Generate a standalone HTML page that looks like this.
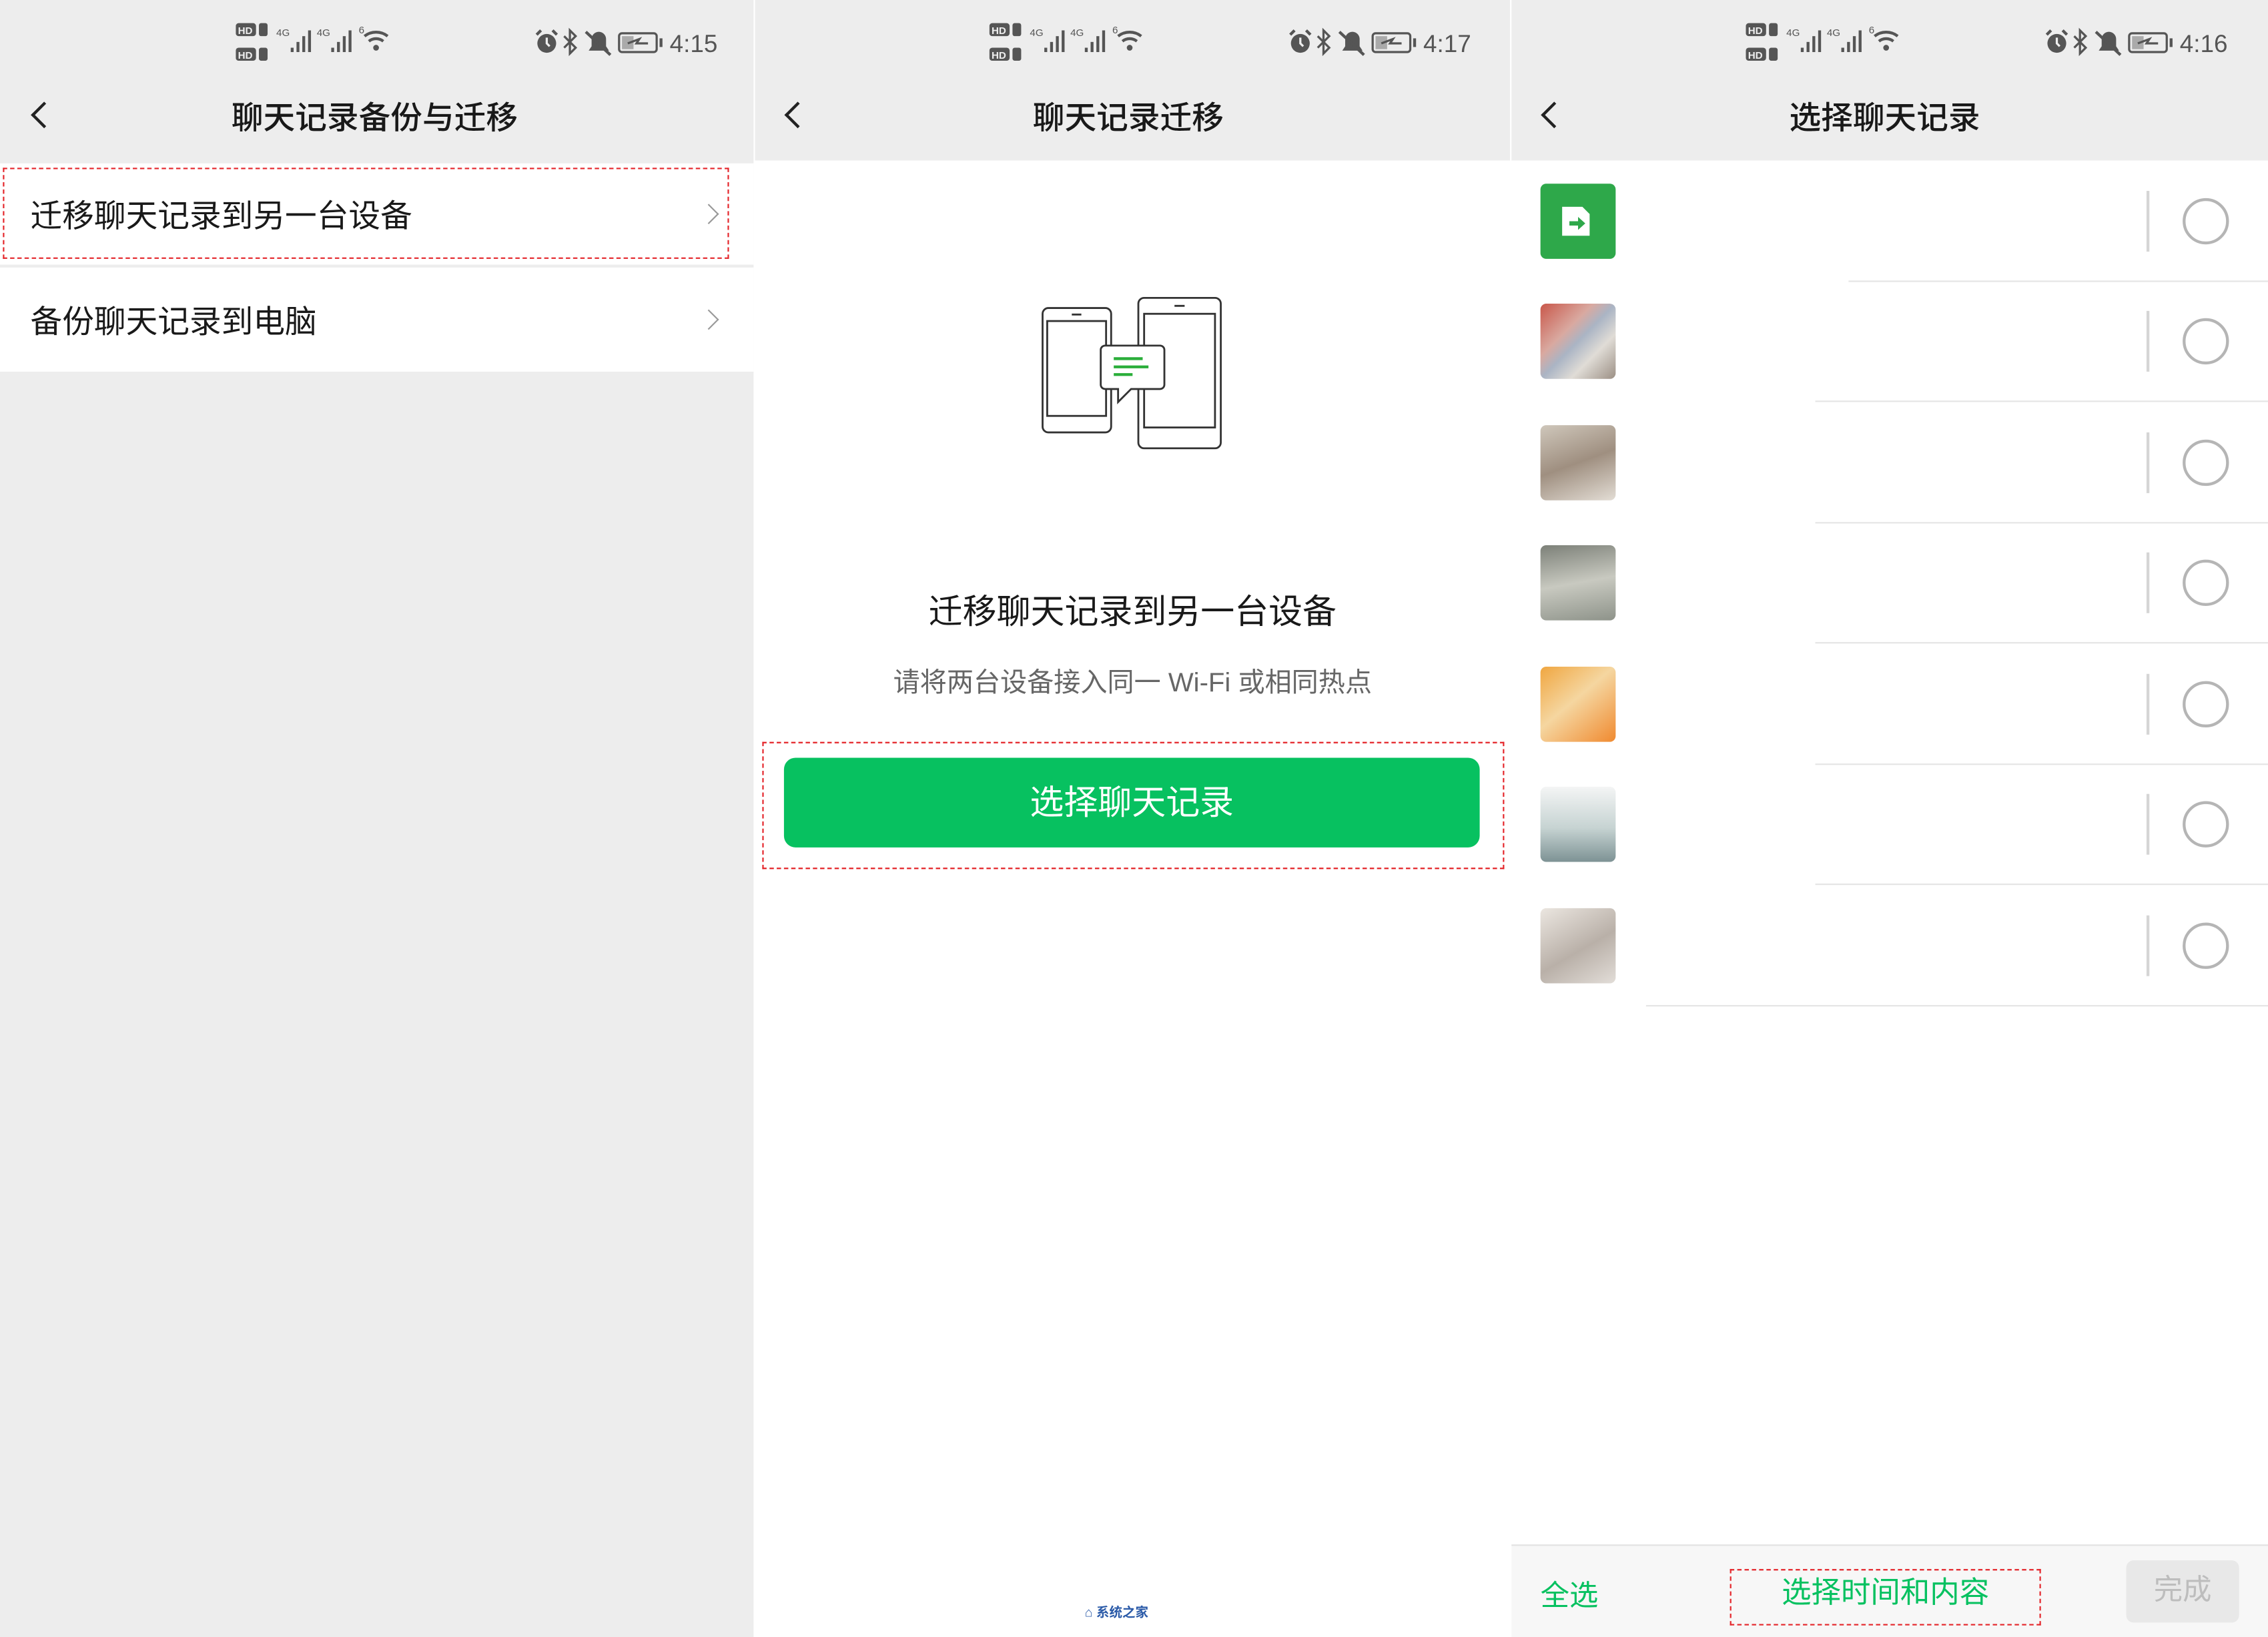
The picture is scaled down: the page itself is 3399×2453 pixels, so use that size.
<!DOCTYPE html>
<html><head><meta charset="utf-8">
<style>
*{margin:0;padding:0;box-sizing:border-box}
html,body{width:3399px;height:2453px;overflow:hidden;background:#fff}
#s{position:absolute;left:0;top:0;width:1568px;height:1132px;transform:scale(2.16773,2.16696);transform-origin:0 0;font-family:"Liberation Sans","Noto Sans CJK SC",sans-serif;color:#111}
.a{position:absolute}
.hdr{background:#ededed}
.t{font-size:22px;font-weight:500;color:#191919;white-space:nowrap}
.chev{position:absolute;width:13px;height:13px;border-left:2px solid #222;border-bottom:2px solid #222;transform:rotate(45deg)}
.rc{position:absolute;width:10px;height:10px;border-right:1.5px solid #999;border-top:1.5px solid #999;transform:rotate(45deg)}
.red{position:absolute;border:1.5px dashed #e4252a}
.av{position:absolute;left:20px;width:52px;height:52px;border-radius:4px}
.circ{position:absolute;left:464px;width:32px;height:32px;border:2px solid #b5b5b5;border-radius:50%}
.vl{position:absolute;left:439px;width:1.5px;height:42px;background:#d5d5d5}
.hl{position:absolute;right:0;height:1px;background:#e5e5e5}
.sb{position:absolute;top:13px;width:340px;height:34px}
.tm{font-family:"Liberation Sans",sans-serif;font-size:17px;fill:#555}
</style></head><body><div id="s">

<svg width="0" height="0" style="position:absolute">
<defs>
<g id="sb">
  <rect x="0" y="3" width="14" height="9" rx="2" fill="#555"/><text x="1.5" y="10.5" font-size="7" fill="#eee" font-family="Liberation Sans" font-weight="bold">HD</text>
  <rect x="16" y="3" width="6" height="9" rx="1.5" fill="#555"/>
  <rect x="0" y="20" width="14" height="9" rx="2" fill="#555"/><text x="1.5" y="27.5" font-size="7" fill="#eee" font-family="Liberation Sans" font-weight="bold">HD</text>
  <rect x="16" y="20" width="6" height="9" rx="1.5" fill="#555"/>
  <text x="28" y="12" font-size="7" fill="#555" font-family="Liberation Sans">4G</text>
  <g fill="#555"><rect x="38" y="20" width="2" height="3"/><rect x="42" y="16" width="2" height="7"/><rect x="46" y="12" width="2" height="11"/><rect x="50" y="8" width="2" height="15"/></g>
  <text x="56" y="12" font-size="7" fill="#555" font-family="Liberation Sans">4G</text>
  <g fill="#555"><rect x="66" y="20" width="2" height="3"/><rect x="70" y="16" width="2" height="7"/><rect x="74" y="12" width="2" height="11"/><rect x="78" y="8" width="2" height="15"/></g>
  <text x="85" y="10" font-size="7" fill="#555" font-family="Liberation Sans">6</text>
  <g fill="none" stroke="#555" stroke-width="2"><path d="M89 12a13 13 0 0 1 16 0"/><path d="M92 15.5a8 8 0 0 1 10 0"/></g><circle cx="97" cy="20" r="2" fill="#555"/>
  <g transform="translate(207,0)">
    <circle cx="8" cy="17" r="6.5" fill="#555"/><path d="M8 13v4l2 2" stroke="#eee" stroke-width="1.5" fill="none"/>
    <path d="M1 11l3-3M15 11l-3-3" stroke="#555" stroke-width="2"/>
    <path d="M20 12l8 8-4 4V8l4 4-8 8" fill="none" stroke="#555" stroke-width="1.5"/>
    <path d="M37 22h14l-2-3v-5a5 5 0 0 0-10 0v5z" fill="#555"/><line x1="35" y1="9" x2="52" y2="25" stroke="#555" stroke-width="2"/>
    <rect x="58" y="10" width="26" height="13" rx="2" fill="none" stroke="#555" stroke-width="1.5"/><rect x="60" y="12" width="8" height="9" fill="#aaa"/><rect x="86" y="13.5" width="2" height="6" fill="#555"/>
    <path d="M64 17l8-3-2 3 8 0" fill="none" stroke="#555" stroke-width="1.5"/>
  </g>
</g>
</defs></svg>

<!-- Panel 1 -->
<div class="a" style="left:0;top:0;width:521px;height:1132px;background:#ededed">
  <svg class="sb" style="left:163px" viewBox="0 0 340 34"><use href="#sb"/><text class="tm" x="300" y="23">4:15</text></svg>
  <div class="chev" style="left:24px;top:73px"></div>
  <div class="a t" style="left:160px;top:64px">聊天记录备份与迁移</div>
  <div class="a" style="left:0;top:113px;width:521px;height:70px;background:#fff"></div>
  <div class="a" style="left:21px;top:132px;font-size:22px;color:#191919">迁移聊天记录到另一台设备</div>
  <div class="rc" style="left:485px;top:143px"></div>
  <div class="red" style="left:2px;top:116px;width:502px;height:63px"></div>
  <div class="a" style="left:0;top:185px;width:521px;height:72px;background:#fff"></div>
  <div class="a" style="left:21px;top:205px;font-size:22px;color:#191919">备份聊天记录到电脑</div>
  <div class="rc" style="left:485px;top:216px"></div>
</div>

<!-- Panel 2 -->
<div class="a" style="left:522px;top:0;width:522px;height:1132px;background:#fff">
  <div class="a hdr" style="left:0;top:0;width:522px;height:111px"></div>
  <svg class="sb" style="left:162px" viewBox="0 0 340 34"><use href="#sb"/><text class="tm" x="300" y="23">4:17</text></svg>
  <div class="chev" style="left:23px;top:73px"></div>
  <div class="a t" style="left:192px;top:64px">聊天记录迁移</div>
  <svg class="a" style="left:190px;top:200px" width="140" height="120" viewBox="0 0 140 120">
    <g fill="none" stroke="#333" stroke-width="1.3">
      <rect x="8.8" y="13" width="47.4" height="86" rx="4" fill="#fff"/>
      <rect x="12" y="22" width="40.7" height="65.6"/>
      <line x1="29" y1="17.5" x2="35.6" y2="17.5"/>
      <rect x="75" y="6" width="57" height="104" rx="4" fill="#fff"/>
      <rect x="79" y="17" width="49" height="78.6"/>
      <line x1="100" y1="11.5" x2="107" y2="11.5"/>
      <path d="M52 39h38a3 3 0 0 1 3 3v24a3 3 0 0 1-3 3H70l-9 9v-9h-9a3 3 0 0 1-3-3V42a3 3 0 0 1 3-3z" fill="#fff"/>
    </g>
    <g stroke="#2aae3a" stroke-width="2"><line x1="58" y1="48" x2="78" y2="48"/><line x1="58" y1="53.7" x2="82" y2="53.7"/><line x1="58" y1="59" x2="71" y2="59"/></g>
  </svg>
  <div class="a" style="left:0;width:522px;top:404px;text-align:center;font-size:23.5px;color:#191919">迁移聊天记录到另一台设备</div>
  <div class="a" style="left:0;width:522px;top:458px;text-align:center;font-size:18.5px;color:#666">请将两台设备接入同一 Wi-Fi 或相同热点</div>
  <div class="a" style="left:20px;top:524px;width:481px;height:62px;background:#07c160;border-radius:8px;color:#fff;font-size:23.5px;text-align:center;line-height:62px">选择聊天记录</div>
  <div class="red" style="left:5px;top:513px;width:513px;height:88px"></div>
  <div class="a" style="left:228px;top:1108px;font-size:9px;color:#2a5aa8;font-weight:bold">⌂ 系统之家</div>
</div>

<!-- Panel 3 -->
<div class="a" style="left:1045px;top:0;width:523px;height:1132px;background:#fff">
  <div class="a hdr" style="left:0;top:0;width:523px;height:111px"></div>
  <svg class="sb" style="left:162px" viewBox="0 0 340 34"><use href="#sb"/><text class="tm" x="300" y="23">4:16</text></svg>
  <div class="chev" style="left:23px;top:73px"></div>
  <div class="a t" style="left:192px;top:64px">选择聊天记录</div>

  <div class="av" style="top:127px;background:#2ea84a">
    <svg width="52" height="52" viewBox="0 0 52 52"><path d="M15 16h14l5 5v15H15z" fill="#fff"/><path d="M20 26h6v-3l5 4.5-5 4.5v-3h-6z" fill="#2ea84a"/></svg>
  </div>
  <div class="av" style="top:210px;background:linear-gradient(135deg,#c9574a 0%,#d9a9a0 35%,#aab4c4 50%,#e0dcd6 70%,#9b8f84 100%)"></div>
  <div class="av" style="top:294px;background:linear-gradient(160deg,#cfc7bb,#9f8f80 50%,#e3ddd5)"></div>
  <div class="av" style="top:377px;background:linear-gradient(170deg,#7c8078,#c8c9c0 50%,#8e938a)"></div>
  <div class="av" style="top:461px;background:linear-gradient(140deg,#f0a640,#f5d6a0 45%,#f08a30 100%)"></div>
  <div class="av" style="top:544px;background:linear-gradient(180deg,#f4f5f5,#c6d3d2 55%,#7d9294)"></div>
  <div class="av" style="top:628px;background:linear-gradient(150deg,#ebe6e0,#b9b0a8 55%,#e2ddd8)"></div>

  <div class="vl" style="top:132px"></div><div class="circ" style="top:137px"></div><div class="hl" style="top:194px;width:290px"></div>
  <div class="vl" style="top:215px"></div><div class="circ" style="top:220px"></div><div class="hl" style="top:277px;width:313px"></div>
  <div class="vl" style="top:299px"></div><div class="circ" style="top:304px"></div><div class="hl" style="top:361px;width:313px"></div>
  <div class="vl" style="top:382px"></div><div class="circ" style="top:387px"></div><div class="hl" style="top:444px;width:313px"></div>
  <div class="vl" style="top:466px"></div><div class="circ" style="top:471px"></div><div class="hl" style="top:528px;width:313px"></div>
  <div class="vl" style="top:549px"></div><div class="circ" style="top:554px"></div><div class="hl" style="top:611px;width:313px"></div>
  <div class="vl" style="top:633px"></div><div class="circ" style="top:638px"></div><div class="hl" style="top:695px;width:430px"></div>

  <div class="a" style="left:0;top:1068px;width:523px;height:64px;background:#f7f7f7;border-top:1px solid #e2e2e2"></div>
  <div class="a" style="left:20px;top:1087px;font-size:20px;color:#07c160">全选</div>
  <div class="a" style="left:151px;top:1085px;width:215px;height:39px;text-align:center;font-size:20.5px;color:#07c160;line-height:34px">选择时间和内容</div>
  <div class="red" style="left:151px;top:1085px;width:215px;height:39px"></div>
  <div class="a" style="left:425px;top:1079px;width:78px;height:43px;background:#e8e8e8;border-radius:5px;color:#bdbdbd;font-size:20px;text-align:center;line-height:43px">完成</div>
</div>

</div></body></html>
